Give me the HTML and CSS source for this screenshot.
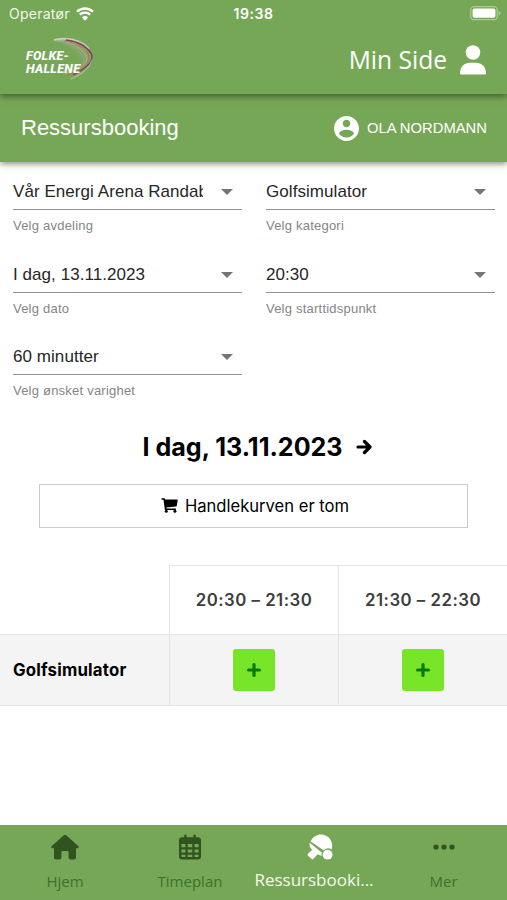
FILE: index.html
```html
<!DOCTYPE html>
<html lang="no">
<head>
  <meta charset="utf-8">
  <meta name="viewport" content="width=device-width, initial-scale=1">
  <title>Ressursbooking</title>
  <link rel="stylesheet" href="styles.css">
</head>
<body>
  <header class="top">
    <div class="status">
      <div class="carrier">
        <span>Operatør</span>
        <svg class="wifi" viewBox="0 0 18 14" width="18" height="14">
          <path d="M1 4.7a11.6 11.6 0 0 1 16 0M3.8 7.7a7.5 7.5 0 0 1 10.4 0" fill="none" stroke="#fff" stroke-width="2.3"/>
          <path d="M9 13.7l-3.1-3.3a4.5 4.5 0 0 1 6.2 0z" fill="#fff"/>
        </svg>
      </div>
      <span class="clock">19:38</span>
      <svg class="battery" viewBox="0 0 31 15" width="31" height="15">
        <rect x=".7" y=".7" width="26.6" height="13" rx="3.5" fill="none" stroke="#a9cb94" stroke-width="1.3"/>
        <rect x="2.6" y="2.6" width="22.8" height="9.2" rx="2" fill="#fff"/>
        <path d="M28.8 5v4.5q1.7-.8 1.7-2.25T28.8 5z" fill="#a9cb94"/>
      </svg>
    </div>
    <div class="brand-bar">
      <div class="logo">
        <svg class="swoosh" viewBox="0 0 42 44" width="42" height="44" fill="none">
          <path d="M2 3Q28-1 39 15Q47 26 20 41Q35 28 29 19Q20 8 2 3z" fill="#9a9c84" opacity=".5"/>
          <path d="M2 3Q24-2 37 12" stroke="#c3cfb9" stroke-width="2"/>
          <path d="M5 4Q23 2 34 14" stroke="#a9b3a0" stroke-width="1.5"/>
          <path d="M14 3Q32 5 39.500 17Q43 27 21 38" stroke="#7c4450" stroke-width="1.4"/>
          <path d="M12 4Q31 7 37 18Q39 28 15 38" stroke="#a77570" stroke-width="1.1"/>
          <path d="M14 5Q31 10 35 21Q36 30 13 37" stroke="#c5b747" stroke-width="1"/>
          <path d="M11 5Q28 11 32 22Q32 32 10 36" stroke="#65b9a4" stroke-width="1"/>
          <path d="M10 6Q25 12 29 23" stroke="#a99a5e" stroke-width=".8"/>
          <path d="M40 23Q37 34 18 42" stroke="#7dbbc1" stroke-width="1"/>
          <path d="M38 28Q32 37 19 42" stroke="#c9bd68" stroke-width="1"/>
        </svg>
        <div class="logo-text">
          <div>FOLKE-</div>
          <div>HALLENE</div>
        </div>
      </div>
      <div class="my-page">
        <span>Min Side</span>
        <svg viewBox="0 0 26 30" width="26" height="30" fill="#fff">
          <circle cx="13" cy="7.5" r="7.3"/>
          <path d="M0 28.2C0 21.5 4.5 17.7 10 17.7h6c5.5 0 10 3.8 10 10.5 0 .8-.6 1.4-1.4 1.4H1.4C.6 29.6 0 29 0 28.2z"/>
        </svg>
      </div>
    </div>
  </header>

  <div class="page-bar">
    <h1>Ressursbooking</h1>
    <div class="user">
      <svg viewBox="2 2 20 20" width="25" height="25" fill="#fff">
        <path d="M12 2C6.48 2 2 6.48 2 12s4.48 10 10 10 10-4.48 10-10S17.52 2 12 2zm0 3c1.66 0 3 1.34 3 3s-1.34 3-3 3-3-1.34-3-3 1.34-3 3-3zm0 14.2c-2.5 0-4.71-1.28-6-3.22.03-1.99 4-3.08 6-3.08 1.99 0 5.97 1.09 6 3.08-1.29 1.94-3.5 3.22-6 3.22z"/>
      </svg>
      <span>OLA NORDMANN</span>
    </div>
  </div>

  <main>
    <div class="filters">
      <div class="field">
        <div class="select"><span class="value">Vår Energi Arena Randaberg</span><i class="caret"></i></div>
        <div class="hint">Velg avdeling</div>
      </div>
      <div class="field">
        <div class="select"><span class="value">Golfsimulator</span><i class="caret"></i></div>
        <div class="hint">Velg kategori</div>
      </div>
      <div class="field">
        <div class="select"><span class="value">I dag, 13.11.2023</span><i class="caret"></i></div>
        <div class="hint">Velg dato</div>
      </div>
      <div class="field">
        <div class="select"><span class="value">20:30</span><i class="caret"></i></div>
        <div class="hint">Velg starttidspunkt</div>
      </div>
      <div class="field">
        <div class="select"><span class="value">60 minutter</span><i class="caret"></i></div>
        <div class="hint">Velg ønsket varighet</div>
      </div>
    </div>

    <div class="day">
      <h2>I dag, 13.11.2023</h2>
      <svg viewBox="0 0 16 18" width="16" height="18" fill="none" stroke="#000" stroke-width="3.2" stroke-linecap="round" stroke-linejoin="round">
        <path d="M2 9h11M8.5 3.5L14 9l-5.5 5.5"/>
      </svg>
    </div>

    <div class="cart">
      <svg viewBox="0 0 17 15" width="17" height="15">
        <path d="M.5.3h2.8q.7 0 .8.6l.1.7h11.9q.7 0 .6.7l-.9 5.5q-.1.7-.8.8l-9.6 1 .2 1h9.3v1.5H4.6q-.7 0-.8-.7L2.5 1.8h-2z"/>
        <circle cx="5.3" cy="13.2" r="1.5"/>
        <circle cx="13.9" cy="13.2" r="1.5"/>
      </svg>
      <span>Handlekurven er tom</span>
    </div>

    <div class="schedule">
      <div class="corner"></div>
      <div class="time">20:30 – 21:30</div>
      <div class="time">21:30 – 22:30</div>
      <div class="resource">Golfsimulator</div>
      <div class="slot">
        <button class="add"><svg viewBox="0 0 14 14" width="14" height="14"><path d="M7 1.6v10.8M1.6 7h10.8"/></svg></button>
      </div>
      <div class="slot">
        <button class="add"><svg viewBox="0 0 14 14" width="14" height="14"><path d="M7 1.6v10.8M1.6 7h10.8"/></svg></button>
      </div>
    </div>
  </main>

  <nav class="tabs">
    <div class="tab">
      <svg viewBox="0 0 28 26" width="28" height="26">
        <path d="M12.8 1.3q1.2-1 2.4 0L27.2 12q.9 1 .3 1.8-.3.5-1.1.5H25v9.2q0 2-2 2h-3.4q-2 0-2-2v-5q0-1.4-1.4-1.4h-4.4q-1.4 0-1.4 1.4v5q0 2-2 2H5q-2 0-2-2v-9.2H1.6q-.8 0-1.1-.5-.6-.8.3-1.8z"/>
      </svg>
      <span>Hjem</span>
    </div>
    <div class="tab">
      <svg viewBox="0 0 22 26" width="22" height="26">
        <path fill-rule="evenodd" d="M5.2 1.7a1.2 1.2 0 0 1 2.4 0v1.6h6.8V1.7a1.2 1.2 0 0 1 2.4 0v1.6h2q3.2 0 3.2 3v16q0 3.2-3.2 3.2H3.2Q0 25.5 0 22.3v-16q0-3 3.2-3h2zM2.4 10v3.2h4V10zm6.3 0v3.2h4.6V10zm6.9 0v3.2h4V10zM2.400 15.400v3.200h4v-3.200zm6.300 0v3.200h4.600v-3.200zm6.900 0v3.200h4v-3.200zM2.400 20.700v1.400q0 1 1 1h3v-2.400zm6.300 0v2.400h4.600v-2.400zm6.900 0v2.400h3q1 0 1-1v-1.400z"/>
      </svg>
      <span>Timeplan</span>
    </div>
    <div class="tab active">
      <svg viewBox="0 0 26 26" width="26" height="26">
        <path d="M3.6 7.5C6 2.5 9.700.5 14 .5c6.500 0 11.200 5 11.200 11.300 0 1.500-.2 2.500-.6 3.600a6.700 6.700 0 0 0-7.900.9z"/>
        <path d="M2.700 8.800l12.200 9.900q-.5 1.600-.1 3-2.300-.1-4.100-1.500l-4.600 4.900q-.7.7-1.400 0L.8 21.500q-.7-.7 0-1.400l4.500-4.300C2.800 14 2 11.500 2.700 8.800z"/>
        <circle cx="20.600" cy="20.700" r="4.900"/>
      </svg>
      <span>Ressursbooki...</span>
    </div>
    <div class="tab">
      <svg viewBox="0 0 22 26" width="22" height="26">
        <circle cx="3" cy="13" r="2.600"/><circle cx="11" cy="13" r="2.600"/><circle cx="19" cy="13" r="2.600"/>
      </svg>
      <span>Mer</span>
    </div>
  </nav>
</body>
</html>
```
FILE: styles.css
```css
* {
  margin: 0;
  padding: 0;
  box-sizing: border-box;
}
body {
  height: 900px;
  display: flex;
  flex-direction: column;
  overflow: hidden;
  background: #fff;
  color: #000;
  font-family: Inter, sans-serif;
}
svg {
  display: block;
  flex: none;
}
.top {
  position: relative;
  z-index: 2;
  height: 94px;
  background: #76a757;
  color: #fff;
  box-shadow: 0 2px 7px rgba(0, 0, 0, 0.5);
}
.status {
  height: 27px;
  display: grid;
  grid-template-columns: 1fr auto 1fr;
  align-items: center;
  padding: 0 6px;
  font-size: 14px;
}
.carrier {
  display: flex;
  align-items: center;
  gap: 6px;
  padding-left: 3px;
  color: #f0f8e9;
  letter-spacing: 0.25px;
}
.clock {
  font-weight: 600;
  letter-spacing: 0.6px;
}
.battery {
  justify-self: end;
}
.brand-bar {
  height: 66px;
  display: flex;
  justify-content: space-between;
  padding: 10px 21px 0 26px;
}
.logo {
  position: relative;
  width: 70px;
  height: 44px;
}
.swoosh {
  position: absolute;
  left: 26px;
  top: 0;
}
.logo-text {
  position: relative;
  padding-top: 12px;
  font-family: Roboto, sans-serif;
  font-size: 12.5px;
  line-height: 13px;
  font-weight: 800;
  font-style: italic;
  letter-spacing: 0.3px;
}
.my-page {
  display: flex;
  height: 45px;
  align-items: center;
  gap: 13px;
  font-family: "Open Sans", sans-serif;
  font-size: 24.6px;
}
.page-bar {
  position: relative;
  z-index: 1;
  height: 68px;
  display: flex;
  align-items: center;
  justify-content: space-between;
  padding: 0 20px 0 21px;
  background: #76a757;
  color: #fff;
  font-family: "Liberation Sans", sans-serif;
  box-shadow: 0 2px 6px rgba(0, 0, 0, 0.45);
}
.page-bar h1 {
  font-size: 22px;
  font-weight: 400;
}
.user {
  display: flex;
  align-items: center;
  gap: 8px;
  font-size: 14.8px;
}
.filters {
  display: grid;
  grid-template-columns: 229px 229px;
  grid-auto-rows: 82.5px;
  column-gap: 24px;
  padding: 13px 13px 0;
  font-family: "Liberation Sans", sans-serif;
}
.select {
  height: 35px;
  display: flex;
  align-items: center;
  justify-content: space-between;
  padding-right: 9px;
  border-bottom: 1px solid #929292;
  color: #262626;
  font-size: 17px;
  letter-spacing: 0.06px;
}
.value {
  width: 190px;
  overflow: hidden;
  white-space: nowrap;
}
.caret {
  border: 6px solid transparent;
  border-top-color: #757575;
  border-bottom: 0;
}
.hint {
  padding-top: 8px;
  color: #858585;
  font-size: 13px;
  line-height: 16px;
  letter-spacing: 0.22px;
}
.day {
  height: 40px;
  display: flex;
  align-items: center;
  justify-content: center;
  gap: 13px;
  margin-top: 4px;
  padding-left: 7px;
}
.day h2 {
  font-size: 25.1px;
  font-weight: 700;
}
.cart {
  height: 44px;
  display: flex;
  align-items: center;
  justify-content: center;
  gap: 7px;
  margin: 17px 39px 0;
  padding-left: 3px;
  border: 1px solid #cbcbcb;
  font-size: 16.6px;
}
.schedule {
  display: grid;
  grid-template-columns: 169px 169px 169px;
  grid-template-rows: 69px 72px;
  margin-top: 37px;
}
.schedule > div {
  display: flex;
  align-items: center;
  justify-content: center;
}
.schedule .time {
  border-top: 1px solid #e5e5e5;
  border-left: 1px solid #e5e5e5;
  color: #3d3d3d;
  font-size: 16.8px;
  font-weight: 600;
  letter-spacing: 0.5px;
}
.schedule .resource,
.schedule .slot {
  background: #f4f4f4;
  border-top: 1px solid #e5e5e5;
  border-bottom: 1px solid #e5e5e5;
}
.schedule .resource {
  justify-content: flex-start;
  padding-left: 13px;
  font-size: 16.8px;
  font-weight: 700;
  letter-spacing: 0.2px;
}
.schedule .slot {
  border-left: 1px solid #e5e5e5;
}
.add {
  width: 42px;
  height: 42px;
  display: flex;
  align-items: center;
  justify-content: center;
  border: 0;
  border-radius: 3px;
  background: #78e528;
}
.add path {
  stroke: #047a04;
  stroke-width: 3.2;
  stroke-linecap: round;
}
.tabs {
  height: 75px;
  display: grid;
  grid-template-columns: 130px 120px 140px 107px;
  margin-top: auto;
  background: #76a757;
  color: #3c722a;
  font-family: "Open Sans", sans-serif;
  font-size: 15px;
}
.tab {
  display: flex;
  flex-direction: column;
  align-items: center;
  padding-top: 9px;
  white-space: nowrap;
}
.tab svg {
  fill: #315320;
}
.tab span {
  margin-top: 9px;
  line-height: 24px;
}
.tab.active {
  color: #f5fbea;
  font-size: 17px;
}
.tab.active svg {
  fill: #fff;
}
.tab.active span {
  margin-top: 8px;
  padding-right: 12px;
}
```
